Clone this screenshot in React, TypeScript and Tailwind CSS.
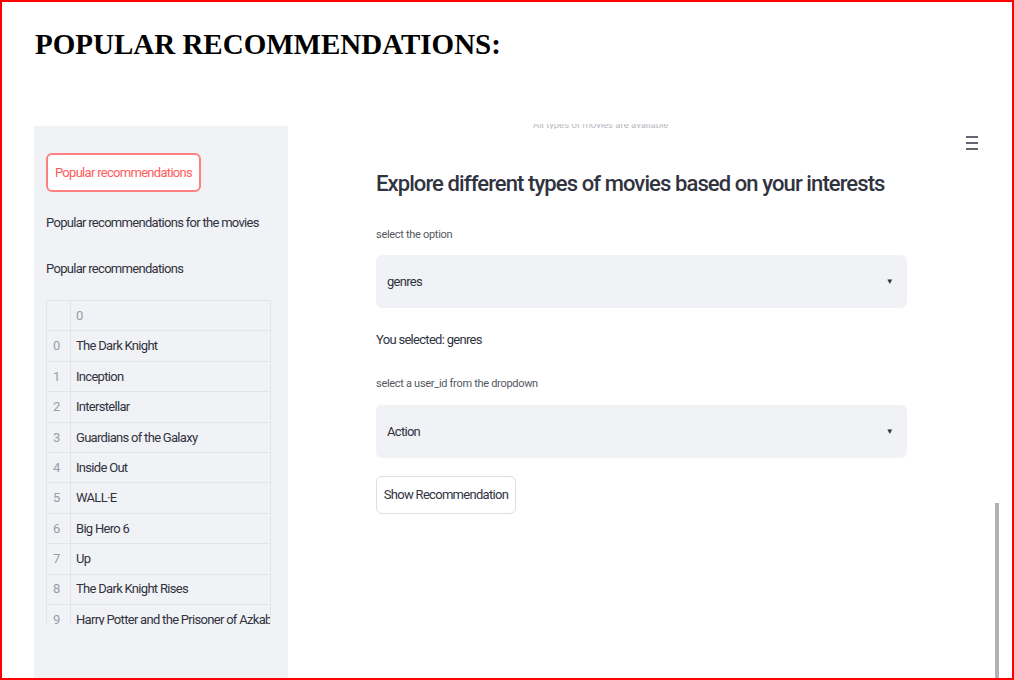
import React from 'react';

const movies = [
  'The Dark Knight',
  'Inception',
  'Interstellar',
  'Guardians of the Galaxy',
  'Inside Out',
  'WALL·E',
  'Big Hero 6',
  'Up',
  'The Dark Knight Rises',
  'Harry Potter and the Prisoner of Azkaban',
];

const appFont = { fontFamily: 'Roboto, "Liberation Sans", sans-serif' };

function SelectBox({ value }: { value: string }) {
  return (
    <div className="flex h-[53px] w-[531px] items-center justify-between rounded-md bg-[#f0f2f6] pl-[11px] pr-[14px] text-[13px] tracking-[-0.7px] text-[#31333f]">
      <span>{value}</span>
      <span className="text-[8px] text-[#31333f]">▼</span>
    </div>
  );
}

export default function App() {
  return (
    <div className="box-border flex h-[680px] w-[1014px] flex-col overflow-hidden border-2 border-[#ff0000] bg-white">
      <h1
        className="ml-[33px] mt-[28px] text-[29px] font-bold leading-none text-black"
        style={{ fontFamily: '"Liberation Serif", serif' }}
      >
        POPULAR RECOMMENDATIONS:
      </h1>

      <div className="mt-[67px] flex min-h-0 flex-1" style={appFont}>
        {/* sidebar */}
        <aside className="ml-[32px] flex w-[254px] flex-col bg-[#f0f2f6] pl-[12px] pt-[27px] text-[13px] tracking-[-0.7px] text-[#31333f]">
          <button className="flex h-[39px] w-[155px] items-center justify-center whitespace-nowrap rounded-md border-2 border-[#ff8080] bg-white text-[#ff5c5c]">
            Popular recommendations
          </button>
          <p className="mt-[21px] whitespace-nowrap leading-[20px]">Popular recommendations for the movies</p>
          <p className="mt-[26px] whitespace-nowrap leading-[20px]">Popular recommendations</p>

          <div className="mt-[21px] h-[325px] w-[225px] overflow-hidden">
            <table className="w-[225px] table-fixed border-collapse">
              <colgroup>
                <col className="w-[24px]" />
                <col />
              </colgroup>
              <tbody>
                <tr className="h-[30.4px]">
                  <td className="border border-[#e2e4ea]"></td>
                  <td className="border border-[#e2e4ea] pl-[5px] text-[#9a9ca6]">0</td>
                </tr>
                {movies.map((m, i) => (
                  <tr key={i} className="h-[30.4px]">
                    <td className="border border-[#e2e4ea] pl-[6px] text-[#9a9ca6]">{i}</td>
                    <td className="overflow-hidden whitespace-nowrap border border-[#e2e4ea] pl-[5px]">{m}</td>
                  </tr>
                ))}
              </tbody>
            </table>
          </div>
        </aside>

        {/* main */}
        <main className="relative flex flex-1 flex-col pl-[88px] text-[#31333f]">
          <div className="-mt-[2px] h-[5px] overflow-hidden pl-[157px] text-[9.5px] leading-[8px] text-[#b6b8c0]">
            <div className="-mt-[3px]">All types of movies are available</div>
          </div>
          <svg
            className="absolute right-[34px] top-[10px]"
            width="12"
            height="14"
            viewBox="0 0 12 14"
            fill="none"
            stroke="#31333f"
            strokeWidth="1.5"
          >
            <line x1="0" y1="1" x2="12" y2="1" />
            <line x1="0" y1="7" x2="12" y2="7" />
            <line x1="0" y1="13" x2="12" y2="13" />
          </svg>
          <h2 className="mt-[39px] whitespace-nowrap text-[22px] font-medium leading-[32px] tracking-[-0.9px]">
            Explore different types of movies based on your interests
          </h2>
          <label className="mt-[27px] text-[11px] leading-[16px] tracking-[-0.3px] text-[#55575f]">select the option</label>
          <div className="mt-[12px]">
            <SelectBox value="genres" />
          </div>
          <p className="mt-[22px] text-[13px] leading-[20px] tracking-[-0.7px]">You selected: genres</p>
          <label className="mt-[26px] text-[11px] leading-[16px] tracking-[-0.3px] text-[#55575f]">
            select a user_id from the dropdown
          </label>
          <div className="mt-[13px]">
            <SelectBox value="Action" />
          </div>
          <button className="mt-[18px] h-[38px] w-[140px] whitespace-nowrap rounded-md border border-[#dcdde2] bg-white text-[13px] tracking-[-0.7px] text-[#31333f]">
            Show Recommendation
          </button>
          <div className="absolute bottom-0 right-[13px] h-[175px] w-[4px] bg-[#b1b1b6]"></div>
        </main>
      </div>
    </div>
  );
}
